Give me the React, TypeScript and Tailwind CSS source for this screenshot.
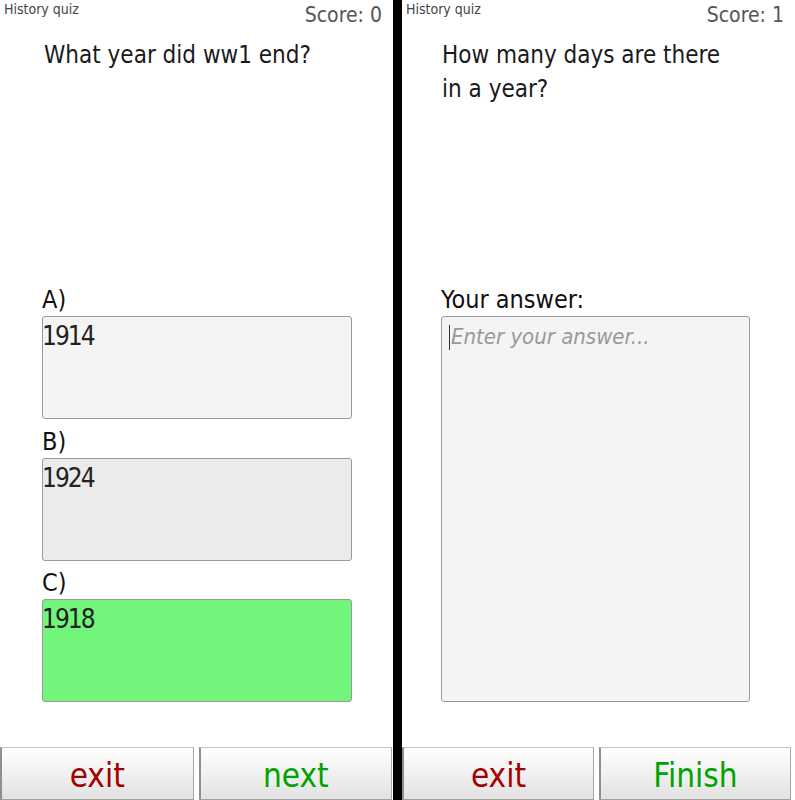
import React from "react";

const font = {
  fontFamily: '"DejaVu Sans Condensed", "DejaVu Sans", sans-serif',
};

function Header({ score }: { score: number }) {
  return (
    <div className="flex h-[30px] items-start justify-between">
      <div className="pl-[4px] pt-[1px] text-[14px] leading-[16px] text-[#444] font-stretch-condensed">
        History quiz
      </div>
      <div className="pr-[11px] pt-[3px] text-[21px] leading-[24px] text-[#555] font-stretch-condensed">
        Score: {score}
      </div>
    </div>
  );
}

function Label({ children, h }: { children: React.ReactNode; h: string }) {
  return (
    <div className={`flex ${h} items-end pb-[4px] text-[25px] leading-none text-[#111] font-stretch-condensed`}>
      {children}
    </div>
  );
}

function Option({ text, bg }: { text: string; bg: string }) {
  return (
    <div
      className={`h-[103px] rounded-[3px] border border-[#9a9a9a] ${bg} text-[26px] leading-[32px] text-[#222] font-stretch-condensed tracking-[-2px]`}
    >
      <span className="-ml-[1px] block pt-[3px]">{text}</span>
    </div>
  );
}

function Btn({ label, color }: { label: string; color: string }) {
  return (
    <button
      className={`flex h-[53px] flex-1 items-center justify-center border border-t-[#c4c4c4] border-r-[#a8a8a8] border-b-[#a0a0a0] border-l-2 border-l-[#8f8f8f] bg-gradient-to-b from-[#ffffff] to-[#e2e2e2] pt-[4px] text-[33px] leading-none ${color} font-stretch-condensed`}
    >
      {label}
    </button>
  );
}

export default function App() {
  return (
    <div className="flex h-[800px] w-[795px] bg-white" style={font}>
      {/* Left panel */}
      <div className="flex w-[393px] flex-col">
        <Header score={0} />
        <div className="h-[247px] pl-[44px] pt-[8px] text-[24px] leading-[34px] text-[#1a1a1a] font-stretch-condensed">
          What year did ww1 end?
        </div>
        <div className="ml-[42px] mr-[41px] flex flex-col">
          <Label h="h-[39px]">A)</Label>
          <Option text="1914" bg="bg-[#f4f4f4]" />
          <Label h="h-[39px]">B)</Label>
          <Option text="1924" bg="bg-[#ebebeb]" />
          <Label h="h-[38px]">C)</Label>
          <Option text="1918" bg="bg-[#71f57b]" />
        </div>
        <div className="flex-1" />
        <div className="flex gap-[5px] pr-[1px]">
          <Btn label="exit" color="text-[#a50000]" />
          <Btn label="next" color="text-[#00a300]" />
        </div>
      </div>

      {/* Divider */}
      <div className="w-[9px] bg-black" />

      {/* Right panel */}
      <div className="flex w-[393px] flex-col">
        <Header score={1} />
        <div className="h-[247px] pl-[40px] pr-[40px] pt-[8px] text-[24px] leading-[34px] text-[#1a1a1a] font-stretch-condensed">
          How many days are there
          <br />
          in a year?
        </div>
        <div className="ml-[39px] mr-[45px] flex flex-col">
          <Label h="h-[39px]">Your answer:</Label>
          <div className="h-[386px] rounded-[3px] border border-[#9a9a9a] bg-[#f4f4f4]">
            <div className="flex items-center pl-[7px] pt-[6px]">
              <span className="inline-block h-[25px] w-[1px] bg-[#333]" />
              <span className="ml-[1px] text-[22px] italic leading-[28px] text-[#999] font-stretch-condensed">
                Enter your answer...
              </span>
            </div>
          </div>
        </div>
        <div className="flex-1" />
        <div className="flex gap-[5px] pr-[4px]">
          <Btn label="exit" color="text-[#a50000]" />
          <Btn label="Finish" color="text-[#00a300]" />
        </div>
      </div>
    </div>
  );
}
